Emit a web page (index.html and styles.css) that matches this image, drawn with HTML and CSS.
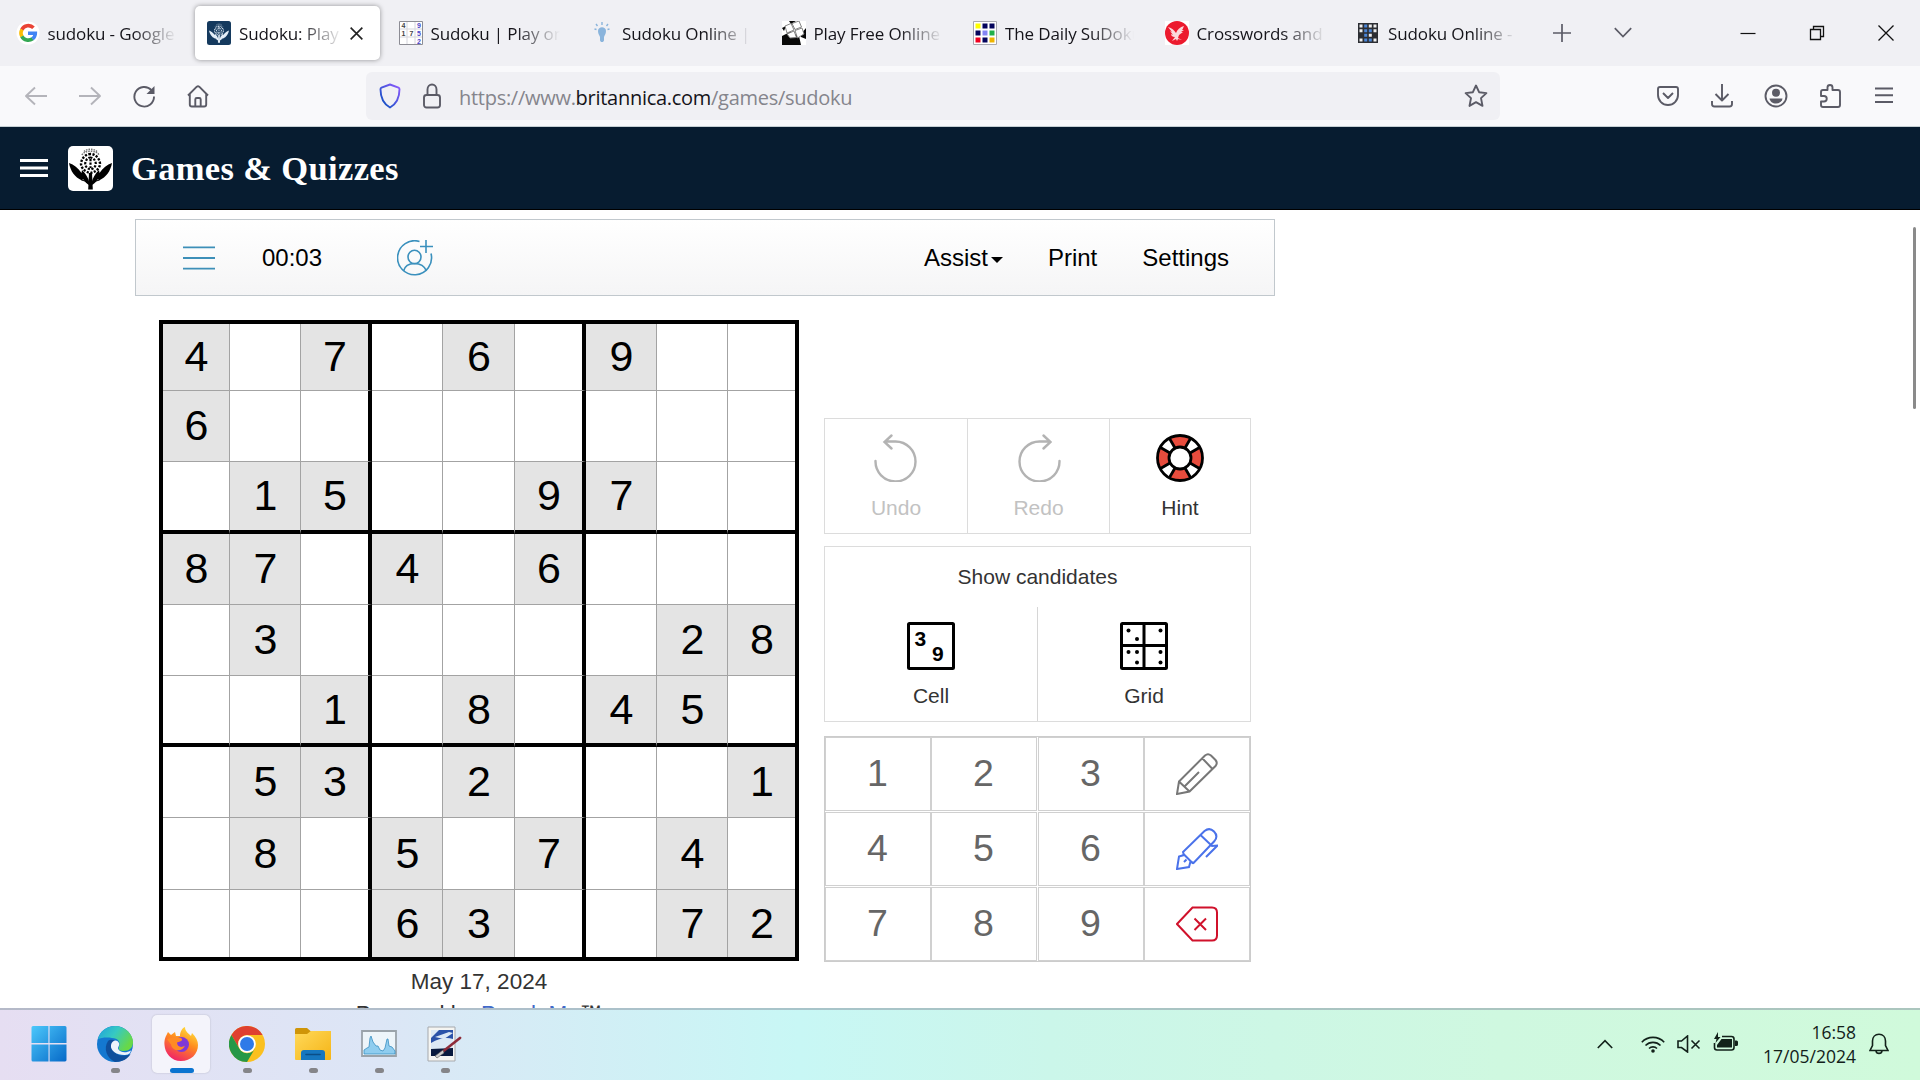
FILE: index.html
```html
<!DOCTYPE html>
<html lang="en">
<head>
<meta charset="utf-8">
<title>Sudoku: Play</title>
<link rel="stylesheet" href="styles.css">
</head>
<body>
<svg class="defs" width="0" height="0">
  <symbol id="thistle" viewBox="0 0 45 45">
    <path d="M20.200 43.500L21 27h3l.8 16.500z"/>
    <path d="M1 17c5 1.500 9 5 12.500 10l.5-3c4 4 6.500 8 7.500 13l-.5 2c-2-1-4-3-6-6l-1 1.500C6.500 31 2.500 25 1 17zM44 17c-5 1.500-9 5-12.500 10l-.5-3c-4 4-6.500 8-7.500 13l.5 2c2-1 4-3 6-6l1 1.500C38.500 31 42.500 25 44 17z"/>
    <path d="M13.500 34l5 1.500M31.500 34l-5 1.500" stroke="currentColor" stroke-width="1"/>
    <path d="M22.500 8c-5 0-9 4.500-9.500 9.500 0 4 3 8 9.500 9.500 6.500-1.500 9.500-5.500 9.500-9.500C31.500 12.500 27.500 8 22.500 8z" fill="none" stroke="currentColor" stroke-width="2.400" stroke-dasharray="2.200 1.400"/>
    <path d="M22.500 11.500c-3 0-5 3-5.300 6 0 3 2 5 5.300 6 3.300-1 5.300-3 5.300-6-.3-3-2.300-6-5.300-6zM22.500 13v9" fill="none" stroke="currentColor" stroke-width="2.200" stroke-dasharray="2.200 1.400"/>
    <path d="M14 9c2-5 15-5 17 0M16 5.500c3-3 10-3 13 0" fill="none" stroke="currentColor" stroke-width="1.500" stroke-dasharray="1.500 1" opacity=".55"/>
  </symbol>
</svg>

<div class="tabs">
  <div class="tab">
    <svg class="fav" viewBox="0 0 24 24"><circle cx="12" cy="12" r="11.500" fill="#fff"/><g fill="none" stroke-width="3.600"><path d="M17.500 6.800A7.300 7.300 0 0 0 5.800 8.700" stroke="#ea4335"/><path d="M5.900 8.500a7.300 7.300 0 0 0 0 7" stroke="#fbbc05"/><path d="M5.800 15.300A7.300 7.300 0 0 0 16.600 17.700" stroke="#34a853"/><path d="M12 12.200h7.300A7.300 7.300 0 0 1 16.400 17.900" stroke="#4285f4"/></g></svg>
    <span class="tab-name">sudoku - Google</span>
  </div>
  <div class="tab tab-on">
    <svg class="fav fav-eb" viewBox="0 0 24 24"><rect width="24" height="24" rx="2.500" fill="#153a5e"/><use href="#thistle" x="1.500" y="1" width="21" height="22"/></svg>
    <span class="tab-name">Sudoku: Play</span>
    <svg class="tab-x" viewBox="0 0 12 12"><path d="M.6.6l10.800 10.800M11.400.6L.6 11.400" stroke="#222" stroke-width="1.500"/></svg>
  </div>
  <div class="tab">
    <svg class="fav" viewBox="0 0 24 24"><path d="M.5.5h23v23H.500z" fill="#fff" stroke="#8c8c94"/><path d="M8 1v22M16 1v22M1 8h22M1 16h22" stroke="#d5d5dc"/><g font-family="Liberation Sans" font-size="7" font-weight="bold" fill="#444"><text x="2.500" y="6.500">4</text><text x="2.500" y="14.500">1</text><text x="10.500" y="14.500">7</text><g fill="#4a45c8"><text x="18" y="6.500">9</text><text x="18" y="14.500">5</text><text x="18" y="22.500">2</text></g></g></svg>
    <span class="tab-name">Sudoku | Play on</span>
  </div>
  <div class="tab">
    <svg class="fav" viewBox="0 0 24 24"><path d="M8 10c0-5 8-5 8 0 0 3-1.500 4-2 6v3.500l-1 1.500h-2l-1-1.500V16c-.5-2-2-3-2-6z" fill="#8ab4dc"/><path d="M12 1v3M6 3l1.500 2M18 3l-1.500 2M4.500 8l2 .5M19.500 8l-2 .5" stroke="#8ab4dc" stroke-width="1.400"/></svg>
    <span class="tab-name">Sudoku Online |</span>
  </div>
  <div class="tab">
    <svg class="fav" viewBox="0 0 24 24"><path d="M0 0h24v24H0z" fill="#fff"/><path d="M0 15l8-4 9 4 2 9H0zM7 0h7L9 3zM19 13l5-6v11l-5-2zM0 7l4-2-2 5z" fill="#080808"/><path d="M3 5l6-2.500L12 9l-7 3zM10 2.500L17 0l2.500 6-6.500 2.500zM13 9.500l7-2.500 2 6-6.500 4zM5 13l7-3 2.500 6.500L8 17z" fill="#fff" stroke="#777" stroke-width=".9"/></svg>
    <span class="tab-name">Play Free Online</span>
  </div>
  <div class="tab">
    <svg class="fav" viewBox="0 0 24 24"><path d="M.5.5h23v23H.500z" fill="#fff" stroke="#a8a8b0"/><path d="M2.500 2.500h5v5h-5z" fill="#ff0"/><path d="M9.500 2.500h5v5h-5zM16.500 2.500h5v5h-5zM2.500 9.500h5v5h-5zM9.500 16.500h5v5h-5z" fill="#04045c"/><path d="M9.500 9.500h5v5h-5z" fill="#8585f5"/><path d="M16.500 9.500h5v5h-5z" fill="#20b04a"/><path d="M2.500 16.500h5v5h-5z" fill="#f00020"/><path d="M16.500 16.500h5v5h-5z" fill="#eeb400"/></svg>
    <span class="tab-name">The Daily SuDoku</span>
  </div>
  <div class="tab">
    <svg class="fav" viewBox="0 0 24 24"><path d="M0 0h24v24H0z" fill="#fff"/><circle cx="12" cy="12" r="12" fill="#ec1a2e"/><path d="M3 6c4 1 6 3 8 6 1-3 4-6 8-7-1 2-1 3-2 4h2l-3 2h2l-4 3-1 3 4 2-4-1-1 2-1-2-4 2 3-4c-3 0-4-2-4-3l2 1-3-4 2 1z" fill="#fbd9dc"/></svg>
    <span class="tab-name">Crosswords and</span>
  </div>
  <div class="tab">
    <svg class="fav fav-sm" viewBox="0 0 20 20"><path d="M0 0h20v20H0z" fill="#2c2e33"/><path d="M1.500 1.500h3v3h-3zM10.800 1.500h3v3h-3zM15.500 1.500h3v3h-3zM1.500 6.200h3v3h-3zM15.500 6.200h3v3h-3zM10.800 10.800h3v3h-3zM1.500 15.500h3v3h-3zM15.500 15.500h3v3h-3z" fill="#eee"/><path d="M6.200 1.500h3v3h-3zM6.200 6.200h3v3h-3zM10.800 6.200h3v3h-3zM6.200 10.800h3v3h-3zM6.200 15.500h3v3h-3zM10.800 15.500h3v3h-3z" fill="#4b86d8"/></svg>
    <span class="tab-name">Sudoku Online -</span>
  </div>
  <div class="tab-tools">
    <svg width="18" height="18" viewBox="0 0 18 18"><path d="M9 0v18M0 9h18" stroke="#5b5b66" stroke-width="1.700"/></svg>
    <svg width="18" height="12" viewBox="0 0 18 12"><path d="M.8 1.200L9 9.600l8.200-8.400" fill="none" stroke="#5b5b66" stroke-width="1.700"/></svg>
  </div>
  <div class="win-tools">
    <svg width="16" height="16" viewBox="0 0 16 16"><path d="M.5 8.500h15" stroke="#111" stroke-width="1.200"/></svg>
    <svg width="16" height="16" viewBox="0 0 16 16"><path d="M1.500 4.500h10v10h-10zM4.500 4.200V1.500h10v10h-2.700" fill="none" stroke="#111" stroke-width="1.300"/></svg>
    <svg width="16" height="16" viewBox="0 0 16 16"><path d="M.5.500l15 15M15.500.5l-15 15" stroke="#111" stroke-width="1.300"/></svg>
  </div>
</div>

<div class="nav">
  <div class="nav-group">
    <svg class="dim" viewBox="0 0 24 24"><path d="M23 12H2M11 3.500L2 12l9 8.500"/></svg>
    <svg class="dim" viewBox="0 0 24 24"><path d="M1 12h21M13 3.500l9 8.500-9 8.500"/></svg>
    <svg viewBox="0 0 24 24"><path d="M19.500 6.200A9.800 9.800 0 1 0 22 12.500"/><path d="M22.500 2v8h-8z" fill="#5b5b66" stroke="none"/></svg>
    <svg viewBox="0 0 24 24"><path d="M2 11.500l8.800-8.800q1.200-1 2.400 0l8.800 8.800M3.800 10v10.500q0 2 2 2h12.400q2 0 2-2V10M9.300 22v-6.500q0-1.500 1.500-1.500h2.400q1.500 0 1.500 1.500V22"/></svg>
  </div>
  <div class="url">
    <svg class="shield" viewBox="0 0 22 26"><defs><linearGradient id="sh" x1="1" y1="0" x2="0" y2="1"><stop offset="0" stop-color="#9059ff"/><stop offset="1" stop-color="#0250bb"/></linearGradient></defs><path d="M11 1.500l8.500 3.200q1 .4 1 1.500C20.500 15 18 20.500 11 24.500 4 20.500 1.500 15 1.500 6.200q0-1.100 1-1.500z" fill="none" stroke="url(#sh)" stroke-width="1.900"/></svg>
    <svg class="lock" viewBox="0 0 18 26"><rect x="1" y="12" width="16" height="12.500" rx="2.500"/><path d="M4.500 12V6.500a4.500 5 0 0 1 9 0V12"/></svg>
    <span class="addr">https://www.<b>britannica.com</b>/games/sudoku</span>
    <svg class="star" viewBox="0 0 24 24"><path d="M12 1.500l3.100 6.700 7.300.9-5.400 5 1.500 7.800-6.500-3.700-6.500 3.700L7 14.100l-5.400-5 7.300-.9z"/></svg>
  </div>
  <div class="nav-group nav-right">
    <svg viewBox="0 0 24 24"><path d="M4 3h16q2 0 2 2v6a10 10 0 0 1-20 0V5q0-2 2-2zM7 9l5 5 5-5"/></svg>
    <svg viewBox="0 0 24 24"><path d="M12 0v16M5.500 10l6.500 6.500L18.500 10M2 17v3q0 2.500 2.500 2.500h15q2.500 0 2.500-2.500v-3"/></svg>
    <svg viewBox="0 0 24 24"><circle cx="12" cy="12" r="10.500"/><g fill="#5b5b66" stroke="none"><circle cx="12" cy="8.700" r="4"/><path d="M5.500 14.500h13c-.5 3-3 5-6.500 5s-6-2-6.500-5z"/></g></svg>
    <svg viewBox="0 0 24 24"><path d="M3 8q0-2 2-2h4.500V3.500a2.500 2.500 0 0 1 5 0V6H20q2 0 2 2v13q0 2-2 2H5q-2 0-2-2v-3.500h3a2.700 2.700 0 0 0 0-5.500H3z"/></svg>
    <svg viewBox="0 0 24 24"><path d="M3 4.500h18M3 11.300h18M3 18h18"/></svg>
  </div>
</div>

<div class="banner">
  <svg class="burger" viewBox="0 0 28 18"><path d="M0 1.500h28M0 9h28M0 16.500h28" stroke="#fff" stroke-width="3"/></svg>
  <span class="logo"><svg viewBox="0 0 45 45"><use href="#thistle"/></svg></span>
  <span class="brand">Games &amp; Quizzes</span>
</div>

<div class="page">
  <div class="scroll"></div>
  <div class="bar">
    <svg class="bar-menu" viewBox="0 0 32 24"><path d="M0 1.300h32M0 12h32M0 22.700h32" stroke="#3d8fb8" stroke-width="1.800"/></svg>
    <span class="timer">00:03</span>
    <svg class="bar-user" viewBox="0 0 36 36"><g fill="none" stroke="#3a90bd" stroke-width="1.600"><path d="M22.500 1.500A17 17 0 1 0 34 13.500"/><ellipse cx="17.500" cy="17" rx="6.500" ry="6.800"/><path d="M6.500 31q2-7.500 11-7.500t12 7.500M29 0v13M23 6.500h13"/></g></svg>
    <span class="assist">Assist</span><i class="caret"></i>
    <span class="print">Print</span>
    <span>Settings</span>
  </div>

  <div class="game">
    <div class="left">
      <div class="grid">
        <b>4</b><i></i><b>7</b><i></i><b>6</b><i></i><b>9</b><i></i><i></i>
        <b>6</b><i></i><i></i><i></i><i></i><i></i><i></i><i></i><i></i>
        <i></i><b>1</b><b>5</b><i></i><i></i><b>9</b><b>7</b><i></i><i></i>
        <b>8</b><b>7</b><i></i><b>4</b><i></i><b>6</b><i></i><i></i><i></i>
        <i></i><b>3</b><i></i><i></i><i></i><i></i><i></i><b>2</b><b>8</b>
        <i></i><i></i><b>1</b><i></i><b>8</b><i></i><b>4</b><b>5</b><i></i>
        <i></i><b>5</b><b>3</b><i></i><b>2</b><i></i><i></i><i></i><b>1</b>
        <i></i><b>8</b><i></i><b>5</b><i></i><b>7</b><i></i><b>4</b><i></i>
        <i></i><i></i><i></i><b>6</b><b>3</b><i></i><i></i><b>7</b><b>2</b>
      </div>
      <div class="date">May 17, 2024</div>
      <div class="powered">Powered by <a>PuzzleMe</a>™</div>
    </div>

    <div class="right">
      <div class="actions">
        <div class="act off"><svg viewBox="0 0 48 48"><path d="M3.500 27A20 20 0 1 0 23.500 7.500H14M19.500 1.500L12.500 8l7 6.500" fill="none" stroke="#b3b3b3" stroke-width="2.400" stroke-linecap="round"/></svg><span>Undo</span></div>
        <div class="act off"><svg viewBox="0 0 48 48"><path d="M44.500 27A20 20 0 1 1 24.500 7.500H34M28.500 1.500L35.500 8l-7 6.500" fill="none" stroke="#b3b3b3" stroke-width="2.400" stroke-linecap="round"/></svg><span>Redo</span></div>
        <div class="act"><svg viewBox="0 0 48 48"><circle cx="24" cy="24" r="16.500" fill="none" stroke="#fff" stroke-width="11"/><g fill="none" stroke="#e84c3d" stroke-width="11"><path d="M15.750 9.710A16.500 16.500 0 0 1 32.250 9.710M38.290 15.750A16.500 16.500 0 0 1 38.290 32.250M32.250 38.290A16.500 16.500 0 0 1 15.750 38.290M9.710 32.250A16.500 16.500 0 0 1 9.710 15.750"/></g><g fill="none" stroke="#000" stroke-width="2.800"><circle cx="24" cy="24" r="22.500"/><circle cx="24" cy="24" r="11"/><path d="M13.500 4.500l5.500 9.500M34.500 4.500L29 14M43.500 13.500L34 19M43.500 34.500L34 29M34.500 43.500L29 34M13.500 43.500L19 34M4.500 34.500L14 29M4.500 13.500L14 19"/></g></svg><span>Hint</span></div>
      </div>

      <div class="cands">
        <div class="cands-title">Show candidates</div>
        <div class="cands-row">
          <div class="cand"><svg viewBox="0 0 48 48"><rect x="1.500" y="1.500" width="45" height="45" rx="1" fill="#fff" stroke="#000" stroke-width="3"/><g font-family="Liberation Sans" font-size="21" font-weight="bold"><text x="7.500" y="23.800">3</text><text x="25" y="38.500">9</text></g></svg><span>Cell</span></div>
          <div class="cand"><svg viewBox="0 0 48 48"><rect x="1.500" y="1.500" width="45" height="45" rx="1" fill="#fff" stroke="#000" stroke-width="3"/><path d="M24 1v46M1 23.500h46" stroke="#000" stroke-width="3"/><circle cx="8.500" cy="8.500" r="2"/><circle cx="17" cy="17" r="2"/><circle cx="40.500" cy="8.500" r="2"/><circle cx="8.500" cy="30" r="2"/><circle cx="17" cy="30" r="2"/><circle cx="17" cy="40.500" r="2"/><circle cx="40.500" cy="30" r="2"/><circle cx="40.500" cy="40.500" r="2"/></svg><span>Grid</span></div>
        </div>
      </div>

      <div class="pad">
        <div>1</div><div>2</div><div>3</div>
        <div><svg viewBox="0 0 42 42" stroke="#777"><path d="M1 41L3 28.500 29 2.500q3-2.500 6 0l4.500 4.500q2.500 3 0 6L13.500 38.500zM26.500 5.500l10 10.500M3 28.500l10.500 10M8 34L23 19"/></svg></div>
        <div>4</div><div>5</div><div>6</div>
        <div><svg viewBox="0 0 42 42" stroke="#4a72ea"><path d="M1 41L3 28.500l5-1.500-1-3L28.500 3q5-4 9.500.500 4.500 4.500.5 9.500L17.500 35l-3-1.500L13 39zM25 7.500L36 18l5.500-.5L30 29M7 25.500L17 35.500M8 34l2.500-2.500"/></svg></div>
        <div>7</div><div>8</div><div>9</div>
        <div><svg viewBox="0 0 42 42" stroke="#d0112b"><path d="M1 21L16.500 4.500H36q5 0 5 5v23q0 5-5 5H16.500zM18.500 15.500l11.500 11.500M30 15.500L18.500 27"/></svg></div>
      </div>
    </div>
  </div>
</div>

<div class="taskbar">
  <div class="apps">
    <div class="app"><svg viewBox="0 0 36 36"><defs><linearGradient id="w" x1="0" y1="0" x2="1" y2="1"><stop offset="0" stop-color="#4cc8fb"/><stop offset="1" stop-color="#0669c8"/></linearGradient></defs><path d="M2 0h15.400v17H0.500V1.500Q.5 0 2 0zM18.600 0H34q1.500 0 1.500 1.500V17h-17zM.5 18.400h17v17H2q-1.500 0-1.500-1.500zM18.600 18.400h16.900V34q0 1.400-1.500 1.400H18.600z" fill="url(#w)"/></svg></div>
    <div class="app open"><svg viewBox="0 0 36 36"><defs><linearGradient id="e1" x1="0" y1="0" x2="1" y2=".5"><stop offset="0" stop-color="#1fa0dc"/><stop offset=".5" stop-color="#36c9c3"/><stop offset="1" stop-color="#68d847"/></linearGradient></defs><circle cx="18" cy="18" r="18" fill="#1478d0"/><path d="M1 13C3 5 10 0 18 0c10 0 18 8 18 16 0 6-4 9-9 9-4 0-6-1-5-4 2-5-1-9-7-9-6-1-11 0-14 1z" fill="url(#e1)"/><path d="M11 15c-5 8-1 17 7 21 7 0 13-3 15.500-8-9 4-19 0-17-8 .5-3 2-4 2-5-3-2-6-1-7.500 0z" fill="#0f4f9c"/><path d="M14 19c1-5 6-6 8-2 1 3-2 4-.5 6.500 2.500 3.500 8 3.500 12.500 1-1 4-4 4.500-7 4.500-7 0-14-4-13-10z" fill="#edf3fb"/></svg></div>
    <div class="app open current"><svg viewBox="0 0 36 36"><defs><linearGradient id="f" x1=".8" y1="0" x2=".3" y2="1"><stop offset="0" stop-color="#ffe83d"/><stop offset=".45" stop-color="#ff8a1f"/><stop offset="1" stop-color="#f0206a"/></linearGradient></defs><path d="M1.500 19C1 13 3 10 5 6l3 3 4-3 1 4 4 0c0-4 2-8 5-9 0 4 3 6 5 8l1 1 1-3c4 4 6 8 6 12 0 9-7 16-17 16S2 27 1.500 19z" fill="url(#f)"/><circle cx="18.500" cy="18.500" r="7.500" fill="#8038d8"/><path d="M4 13l8-2 6 1c2 1 1 3-1 3.500l-3 1c0 4 4 6 8 3-2 7-13 6-14-1z" fill="#ff8b24"/></svg></div>
    <div class="app open"><svg viewBox="0 0 36 36"><circle cx="18" cy="18" r="18" fill="#fbc01f"/><path d="M2.400 9A18 18 0 0 1 33.600 9H18a9 9 0 0 0-8 13z" fill="#df4030"/><path d="M2.400 9A18 18 0 0 0 18 36l8-13.500a9 9 0 0 1-16-.5z" fill="#279847"/><circle cx="18" cy="18" r="8.800" fill="#fff"/><circle cx="18" cy="18" r="7" fill="#2f7ae8"/></svg></div>
    <div class="app open"><svg viewBox="0 0 36 36"><defs><linearGradient id="fo" x1="0" y1="0" x2="1" y2="1"><stop offset="0" stop-color="#ffd95a"/><stop offset="1" stop-color="#f5b416"/></linearGradient></defs><path d="M0 3.500Q0 2 1.500 2H12l4 3.500h18.500Q36 5.500 36 7v8H0z" fill="#cf9508"/><path d="M0 8h12l4-3h20v28q0 1-1 1H1q-1 0-1-1z" fill="url(#fo)"/><path d="M6 34v-7q0-3 3-3h18q3 0 3 3v7z" fill="#1677bf"/><path d="M11 28.500h14" stroke="#0b4e86" stroke-width="1.600" stroke-linecap="round"/></svg></div>
    <div class="app open"><svg viewBox="0 0 36 36"><path d="M1 5h34v25H1z" fill="#edf5fa" stroke="#9aa3aa" stroke-width="1.800"/><path d="M3 28V24l3-2 2-1 1-9 1-2 2 6 3 4 2 0 2 4 3 1 2-3 2-9 1 0 1 7 3 1 3 4v3z" fill="#8fcdef" stroke="#398fc2" stroke-width=".8"/></svg></div>
    <div class="app open"><svg viewBox="0 0 36 36"><path d="M1 1h27v34H1z" fill="#f5f5f2" stroke="#a6a9ad"/><path d="M4 4h22v26H4z" fill="#2a52a8"/><path d="M4 4h8l-8 8zM8 11l14-5 4 1-9 6zM4 17q12-7 22-4v10H4z" fill="#dbe8f5"/><path d="M4 23l22-1v8H4z" fill="#091a3e"/><path d="M33 12L14 27" stroke="#8d2a38" stroke-width="2.600" stroke-linecap="round"/><path d="M16 24l-8 6 2 2 7-5z" fill="#ccc" stroke="#555" stroke-width=".6"/></svg></div>
  </div>
  <div class="tray">
    <svg class="t-up" viewBox="0 0 16 10"><path d="M.8 9L8 1.600 15.200 9"/></svg>
    <svg class="t-wifi" viewBox="0 0 24 18"><path d="M.8 7.200a15.500 15.500 0 0 1 22.400 0M4.500 10.500a10.500 10.500 0 0 1 15 0M8 13.500a5.800 5.800 0 0 1 8 0"/><circle cx="12" cy="16" r="1.800" fill="#12211a" stroke="none"/></svg>
    <svg class="t-vol" viewBox="0 0 24 18"><path d="M1 6h3.500L10.500 1v16L4.500 12.500H1zM14.500 5.500l8 8M22.500 5.500l-8 8"/></svg>
    <svg class="t-bat" viewBox="0 0 25 20"><path d="M9 4.500h9.500q2.500 0 2.500 2.500v8.500q0 2.500-2.500 2.500H4q-2.500 0-2.500-2.500V11"/><path d="M8.500 7H19v8.500H4V13zM22 8.500h1.500q1.500 0 1.500 1.500v2.500q0 1.500-1.500 1.500H22zM5 0L1 7h2.500L2.500 11 7.500 5H5z" fill="#12211a" stroke="none"/></svg>
    <div class="clock"><span>16:58</span><span>17/05/2024</span></div>
    <svg class="t-bell" viewBox="0 0 20 22"><path d="M10 1.200c-4 0-6.500 3-6.500 6.800v4.500L1 17.500h18l-2.500-5V8c0-3.800-2.500-6.800-6.500-6.800zM7 17.800c.5 3.400 5.500 3.400 6 0"/></svg>
  </div>
</div>
</body>
</html>
```

FILE: styles.css
```css
* { box-sizing: border-box; }
body {
  margin: 0;
  width: 1920px;
  height: 1080px;
  overflow: hidden;
  display: flex;
  flex-direction: column;
  background: #fff;
  font-family: "Liberation Sans", Arial, sans-serif;
  color: #000;
}
svg { display: block; flex: none; }
i { font-style: normal; }
.defs { position: absolute; }

/* browser tabs */
.tabs {
  height: 66px;
  flex: none;
  display: flex;
  align-items: center;
  gap: 6.500px;
  padding-left: 3.500px;
  background: #f0f0f4;
  font-family: "Open Sans", sans-serif;
  font-size: 17px;
}
.tab {
  width: 185px;
  height: 54px;
  flex: none;
  display: flex;
  align-items: center;
  padding-left: 12px;
  border-radius: 5px;
}
.tab-on { background: #fff; box-shadow: 0 0 5px rgba(0, 0, 0, .4); }
.fav { width: 24px; height: 24px; }
.fav-sm { width: 20px; height: 20px; margin: 0 2px; }
.fav-eb { fill: #e4eef7; color: #e4eef7; }
.tab-name {
  width: 129px;
  flex: none;
  margin-left: 8px;
  overflow: hidden;
  white-space: nowrap;
  color: #15141a;
  letter-spacing: -.12px;
  -webkit-mask-image: linear-gradient(to left, transparent 0, #000 44px);
  mask-image: linear-gradient(to left, transparent 0, #000 44px);
}
.tab-on .tab-name { width: 104px; }
.tab-x { width: 13px; height: 13px; margin-left: 7px; }
.tab-tools { display: flex; align-items: center; gap: 43px; margin-left: 17px; }
.win-tools { display: flex; align-items: center; gap: 53px; margin: 0 26px 0 auto; }

/* navigation bar */
.nav {
  height: 61px;
  flex: none;
  display: flex;
  align-items: center;
  padding: 0 9px;
  background: #f9f9fb;
  border-bottom: 1px solid #c6d0d4;
}
.nav-group { display: flex; }
.nav-group svg { width: 24px; height: 24px; margin: 0 15px; }
.nav svg { fill: none; stroke: #5b5b66; stroke-width: 1.900; stroke-linejoin: round; }
.nav .dim { stroke: #b4b4ba; }
.nav-right { margin-left: auto; }
.url {
  width: 1134px;
  height: 48px;
  margin-left: 141px;
  padding: 0 12px 0 13px;
  display: flex;
  align-items: center;
  background: #f0f0f4;
  border-radius: 6px;
}
.shield { width: 22px; height: 26px; }
.lock { width: 18px; height: 26px; margin-left: 22px; }
.addr {
  margin: 2px 0 0 18px;
  font: 20px "Open Sans", sans-serif;
  letter-spacing: -.28px;
  color: #85858c;
  white-space: nowrap;
}
.addr b { font-weight: 400; color: #15141a; }
.star { width: 24px; height: 24px; margin-left: auto; }

/* site header */
.banner {
  height: 83px;
  flex: none;
  display: flex;
  align-items: center;
  padding-left: 20px;
  background: #071c30;
  border-bottom: 1px solid #000;
}
.burger { width: 28px; height: 18px; }
.logo { width: 45px; height: 45px; margin-left: 20px; background: #fff; border-radius: 5px; }
.brand {
  margin: 1px 0 0 18px;
  font: bold 34.500px "Liberation Serif", serif;
  letter-spacing: .35px;
  color: #fff;
}

/* page content */
.page {
  position: relative;
  height: 798px;
  flex: none;
  overflow: hidden;
  padding: 9px 0 0 135px;
}
.scroll {
  position: absolute;
  right: 4px;
  top: 17px;
  width: 3px;
  height: 182px;
  background: #8a8a8a;
  border-radius: 2px;
}
.bar {
  width: 1140px;
  height: 77px;
  display: flex;
  align-items: center;
  padding: 0 45px 0 47px;
  border: 1px solid #c1c8cd;
  background: linear-gradient(#fff, #f5f5f6);
  font-size: 24px;
}
.bar-menu { width: 32px; height: 24px; }
.timer { margin-left: 47px; }
.bar-user { width: 36px; height: 36px; margin-left: 75px; }
.assist { margin-left: auto; }
.caret { margin: 4px 0 0 3px; border: 6px solid transparent; border-top-color: #000; border-bottom: 0; }
.print { margin: 0 45px; }

.game { display: flex; padding: 24px 0 0 24px; }
.left { width: 640px; text-align: center; font-size: 22.500px; color: #333; }
.grid {
  display: grid;
  grid-template-columns: 67px 71px 71px 71px 72px 71px 71px 71px 67px;
  grid-template-rows: 67px 71px 72px 71px 71px 71px 71px 72px 67px;
  border: 4px solid #000;
  font-size: 43px;
  color: #000;
}
.grid > * {
  display: flex;
  align-items: center;
  justify-content: center;
  font-weight: 400;
  border-right: 1px solid #a3a3a3;
  border-bottom: 1px solid #a3a3a3;
}
.grid b { background: #e4e4e4; padding: 0 0 1px 1px; }
.grid > :nth-child(9n+3), .grid > :nth-child(9n+6) { border-right: 4px solid #000; }
.grid > :nth-child(9n) { border-right: 0; }
.grid > :nth-child(n+19):nth-child(-n+27),
.grid > :nth-child(n+46):nth-child(-n+54) { border-bottom: 4px solid #000; }
.grid > :nth-child(n+73) { border-bottom: 0; }
.date { margin-top: 8px; line-height: 26px; }
.powered { margin-top: 6px; line-height: 26px; white-space: nowrap; }
.powered a { color: #4169c8; }

.right { width: 427px; margin: 98px 0 0 25px; font-size: 21px; color: #333; }
.actions {
  display: grid;
  grid-template-columns: 143px 142px 140px;
  height: 116px;
  border: 1px solid #dcdcdc;
}
.act {
  display: flex;
  flex-direction: column;
  align-items: center;
  padding-top: 15px;
  border-right: 1px solid #dcdcdc;
}
.act:last-child { border-right: 0; }
.act svg, .cand svg { width: 48px; height: 48px; }
.act span { margin-top: 14px; line-height: 24px; }
.off { color: #c2c2c2; }
.cands { height: 176px; margin-top: 12px; border: 1px solid #dcdcdc; text-align: center; }
.cands-title { height: 60px; padding-top: 18px; line-height: 24px; }
.cands-row { display: flex; height: 114px; }
.cand {
  flex: 1;
  display: flex;
  flex-direction: column;
  align-items: center;
  padding-top: 15px;
}
.cand:first-child { border-right: 1px solid #d6d6d6; }
.cand span { margin-top: 14px; line-height: 24px; }
.pad {
  margin-top: 14px;
  display: grid;
  grid-template-columns: 106px 107px 106px 106px;
  grid-auto-rows: 74px;
  row-gap: 1px;
  border: 1px solid #ccc;
  font-size: 37.500px;
  color: #666;
}
.pad div {
  display: flex;
  align-items: center;
  justify-content: center;
  padding: 0 1px 2px 0;
  border: 1px solid #d0d0d0;
}
.pad div:nth-child(4n+2) { margin-right: 1px; }
.pad svg { width: 42px; height: 42px; fill: none; stroke-width: 2; margin-bottom: -2px; }

/* desktop taskbar */
.taskbar {
  height: 72px;
  flex: none;
  display: flex;
  justify-content: space-between;
  border-top: 2px solid rgba(140, 155, 165, .55);
  background: linear-gradient(90deg, #e6def2 0, #dce6f6 380px, #c8f7f5 800px, #cbf6ea 1050px, #cff8e0 1500px, #d0fadb 1920px);
}
.apps { display: flex; padding: 5px 0 0 20px; }
.app {
  position: relative;
  width: 58px;
  height: 58px;
  margin-right: 8px;
  padding: 11px;
  border-radius: 5px;
}
.app svg { width: 36px; height: 36px; }
.open::after {
  content: "";
  position: absolute;
  left: 25px;
  bottom: 0;
  width: 9px;
  height: 5px;
  border-radius: 3px;
  background: #858589;
}
.current { background: #f4f4fb; box-shadow: 0 0 2px rgba(0, 0, 0, .2); }
.current::after { left: 18px; width: 24px; background: #0b74d0; }
.tray {
  display: flex;
  align-items: center;
  padding: 0 31px 3px 0;
}
.tray svg { fill: none; stroke: #12211a; stroke-width: 1.600; }
.t-up { width: 16px; height: 10px; }
.t-wifi { width: 24px; height: 18px; margin-left: 28px; }
.t-vol { width: 24px; height: 18px; margin-left: 12px; }
.t-bat { width: 25px; height: 20px; margin: -3px 0 0 12px; }
.clock {
  width: 118px;
  display: flex;
  flex-direction: column;
  align-items: flex-end;
  font: 17.500px/24px "Open Sans", sans-serif;
  color: #12211a;
}
.t-bell { width: 20px; height: 22px; margin-left: 13px; }
```
